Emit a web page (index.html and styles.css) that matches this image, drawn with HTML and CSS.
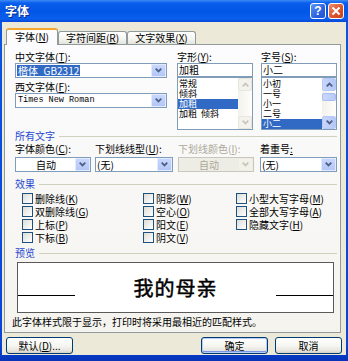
FILE: index.html
```html
<!DOCTYPE html>
<html lang="zh-CN">

<head>
  <meta charset="UTF-8">
  <title>字体</title>
  <link rel="stylesheet" href="styles.css">
</head>

<body>
  <div class="window">
    <div class="titlebar">
      <div class="title">字体</div>
      <div class="caption-buttons">
        <div class="cap-btn help">?</div>
        <div class="cap-btn close">
          <svg width="10" height="10" viewBox="0 0 10 10"><path d="M1.5 1.5 L8.5 8.5 M8.5 1.5 L1.5 8.5" stroke="#fff" stroke-width="2" fill="none"/></svg>
        </div>
      </div>
    </div>

    <div class="frame">
      <div class="client">
        <div class="tabs">
          <div class="tab active">字体(<u>N</u>)</div>
          <div class="tab">字符间距(<u>R</u>)</div>
          <div class="tab">文字效果(<u>X</u>)</div>
        </div>

        <div class="panel">
          <div class="font-row">
            <div class="col-font">
              <div class="label">中文字体(<u>T</u>):</div>
              <div class="combo">
                <div class="value"><span class="hilite">楷体_GB2312</span></div>
                <div class="drop"><svg width="7" height="5" viewBox="0 0 7 5"><path d="M0.7 0.7 L3.5 3.5 L6.3 0.7" stroke="#4D6185" stroke-width="1.8" fill="none"/></svg></div>
              </div>
              <div class="label second">西文字体(<u>F</u>):</div>
              <div class="combo">
                <div class="value latin">Times New Roman</div>
                <div class="drop"><svg width="7" height="5" viewBox="0 0 7 5"><path d="M0.7 0.7 L3.5 3.5 L6.3 0.7" stroke="#4D6185" stroke-width="1.8" fill="none"/></svg></div>
              </div>
            </div>

            <div class="col-list">
              <div class="label">字形(<u>Y</u>):</div>
              <div class="textbox">加粗</div>
              <div class="listbox">
                <div class="items">
                  <div class="item">常规</div>
                  <div class="item">倾斜</div>
                  <div class="item selected">加粗</div>
                  <div class="item">加粗&nbsp;&nbsp;倾斜</div>
                </div>
                <div class="scrollbar disabled">
                  <div class="arrow"><svg width="7" height="5" viewBox="0 0 7 5"><path d="M0.7 4.3 L3.5 1.5 L6.3 4.3" stroke="#C9C7BA" stroke-width="1.8" fill="none"/></svg></div>
                  <div class="track"></div>
                  <div class="arrow"><svg width="7" height="5" viewBox="0 0 7 5"><path d="M0.7 0.7 L3.5 3.5 L6.3 0.7" stroke="#C9C7BA" stroke-width="1.8" fill="none"/></svg></div>
                </div>
              </div>
            </div>

            <div class="col-list size">
              <div class="label">字号(<u>S</u>):</div>
              <div class="textbox">小二</div>
              <div class="listbox">
                <div class="items">
                  <div class="item">小初</div>
                  <div class="item">一号</div>
                  <div class="item">小一</div>
                  <div class="item">二号</div>
                  <div class="item selected">小二</div>
                </div>
                <div class="scrollbar">
                  <div class="arrow"><svg width="7" height="5" viewBox="0 0 7 5"><path d="M0.7 4.3 L3.5 1.5 L6.3 4.3" stroke="#4D6185" stroke-width="1.8" fill="none"/></svg></div>
                  <div class="track"><div class="thumb"></div></div>
                  <div class="arrow"><svg width="7" height="5" viewBox="0 0 7 5"><path d="M0.7 0.7 L3.5 3.5 L6.3 0.7" stroke="#4D6185" stroke-width="1.8" fill="none"/></svg></div>
                </div>
              </div>
            </div>
          </div>

          <div class="group-title"><span>所有文字</span><div class="rule"></div></div>

          <div class="attr-row">
            <div class="attr">
              <div class="label">字体颜色(<u>C</u>):</div>
              <div class="combo w76">
                <div class="value center">自动</div>
                <div class="drop"><svg width="7" height="5" viewBox="0 0 7 5"><path d="M0.7 0.7 L3.5 3.5 L6.3 0.7" stroke="#4D6185" stroke-width="1.8" fill="none"/></svg></div>
              </div>
            </div>
            <div class="attr">
              <div class="label">下划线线型(<u>U</u>):</div>
              <div class="combo w78">
                <div class="value">(无)</div>
                <div class="drop"><svg width="7" height="5" viewBox="0 0 7 5"><path d="M0.7 0.7 L3.5 3.5 L6.3 0.7" stroke="#4D6185" stroke-width="1.8" fill="none"/></svg></div>
              </div>
            </div>
            <div class="attr">
              <div class="label grey">下划线颜色(<u>I</u>):</div>
              <div class="combo w76 disabled">
                <div class="value center">自动</div>
                <div class="drop"><svg width="7" height="5" viewBox="0 0 7 5"><path d="M0.7 0.7 L3.5 3.5 L6.3 0.7" stroke="#C9C7BA" stroke-width="1.8" fill="none"/></svg></div>
              </div>
            </div>
            <div class="attr">
              <div class="label">着重号<u>:</u></div>
              <div class="combo w77">
                <div class="value">(无)</div>
                <div class="drop"><svg width="7" height="5" viewBox="0 0 7 5"><path d="M0.7 0.7 L3.5 3.5 L6.3 0.7" stroke="#4D6185" stroke-width="1.8" fill="none"/></svg></div>
              </div>
            </div>
          </div>

          <div class="group-title effects"><span>效果</span><div class="rule"></div></div>

          <div class="checks">
            <div class="check"><span class="box"></span>删除线(<u>K</u>)</div>
            <div class="check"><span class="box"></span>阴影(<u>W</u>)</div>
            <div class="check"><span class="box"></span>小型大写字母(<u>M</u>)</div>
            <div class="check"><span class="box"></span>双删除线(<u>G</u>)</div>
            <div class="check"><span class="box"></span>空心(<u>O</u>)</div>
            <div class="check"><span class="box"></span>全部大写字母(<u>A</u>)</div>
            <div class="check"><span class="box"></span>上标(<u>P</u>)</div>
            <div class="check"><span class="box"></span>阳文(<u>E</u>)</div>
            <div class="check"><span class="box"></span>隐藏文字(<u>H</u>)</div>
            <div class="check"><span class="box"></span>下标(<u>B</u>)</div>
            <div class="check"><span class="box"></span>阴文(<u>V</u>)</div>
          </div>

          <div class="group-title preview-title"><span>预览</span><div class="rule"></div></div>

          <div class="preview">
            <div class="baseline"></div>
            <div class="sample">我的母亲</div>
            <div class="baseline"></div>
          </div>

          <div class="note">此字体样式限于显示，打印时将采用最相近的匹配样式。</div>
        </div>

        <div class="buttons">
          <div class="btn">默认(<u>D</u>)...</div>
          <div class="spacer"></div>
          <div class="btn default">确定</div>
          <div class="btn">取消</div>
        </div>
      </div>
    </div>
  </div>
</body>

</html>
```

FILE: styles.css
```css
body {
  margin: 0;
  width: 348px;
  height: 361px;
  overflow: hidden;
  font-family: "Noto Sans CJK SC", "Noto Sans", sans-serif;
  font-size: 10px;
  color: #000;
}

u {
  text-decoration: underline;
  text-underline-offset: 1px;
}

.window {
  width: 348px;
  height: 361px;
  display: flex;
  flex-direction: column;
}

/* --- title bar --- */
.titlebar {
  height: 22px;
  flex: none;
  display: flex;
  align-items: center;
  justify-content: space-between;
  padding: 0 4px 0 5px;
  background: linear-gradient(to bottom, #3D8BF5 0, #0A5EEB 3px, #0256E6 50%, #0B5FEF 85%, #0846D6 100%);
}

.title {
  color: #fff;
  font-size: 12px;
  font-weight: bold;
  text-shadow: 1px 1px 0 #0A2A8C;
  line-height: 14px;
}

.caption-buttons {
  display: flex;
  gap: 2px;
}

.cap-btn {
  width: 16px;
  height: 16px;
  box-sizing: border-box;
  border: 1px solid #fff;
  border-radius: 3px;
  display: flex;
  align-items: center;
  justify-content: center;
}

.help {
  background: linear-gradient(to bottom right, #5F97F8, #2A62E2 60%, #1D52D6);
  color: #fff;
  font-family: "Liberation Sans", sans-serif;
  font-weight: bold;
  font-size: 12px;
  line-height: 14px;
}

.close {
  background: linear-gradient(to bottom right, #EE8B6B, #DC5530 55%, #C8401C);
}

/* --- frame and client area --- */
.frame {
  flex: 1;
  display: flex;
  padding: 0 2px 6px;
  background: linear-gradient(to bottom, #0A55E4, #0845D8 95%, #0634B8);
}

.client {
  flex: 1;
  background: #ECE9D8;
  padding: 6px 4px 0 2px;
  display: flex;
  flex-direction: column;
}

/* --- tabs --- */
.tabs {
  display: flex;
  align-items: flex-end;
  height: 16px;
  margin-left: 2px;
  position: relative;
  z-index: 1;
}

.tab {
  height: 13px;
  width: 69px;
  box-sizing: border-box;
  border: 1px solid #919B9C;
  border-bottom: none;
  border-radius: 3px 3px 0 0;
  background: linear-gradient(to bottom, #FFFFFF, #F4F4F0 60%, #E4E3DB);
  text-align: center;
  line-height: 11px;
  white-space: nowrap;
}

.tab.active {
  width: 52px;
  height: 17px;
  margin-bottom: -1px;
  border-top: 2px solid #F4A62D;
  background: #FCFCFE;
  line-height: 13px;
}

/* --- tab panel --- */
.panel {
  width: 337px;
  height: 289px;
  box-sizing: border-box;
  border: 1px solid #919B9C;
  background: linear-gradient(to bottom, #FCFCFE, #F4F3EE);
  padding: 6px 3px 0 10px;
  display: flex;
  flex-direction: column;
}

.label {
  height: 12px;
  line-height: 12px;
  white-space: nowrap;
}

.label.second {
  margin-top: 3px;
}

.label.grey {
  color: #ACA899;
}

.font-row {
  display: flex;
  height: 79px;
}

.col-font {
  width: 152px;
}

.col-list {
  width: 76px;
  margin-left: 10px;
}

.col-list.size {
  margin-left: 8px;
}

.combo {
  height: 15px;
  box-sizing: border-box;
  border: 1px solid #7F9DB9;
  background: #fff;
  display: flex;
}

.combo .value {
  flex: 1;
  padding-left: 1px;
  line-height: 13px;
  white-space: nowrap;
  overflow: hidden;
}

.combo .value.center {
  text-align: center;
}

.combo .value.latin {
  font-family: "Liberation Mono", monospace;
  font-size: 8.5px;
  padding-left: 2px;
}

.hilite {
  display: inline-block;
  background: #316AC5;
  color: #fff;
  line-height: 11px;
  padding: 0 1px;
  margin-top: 1px;
  vertical-align: top;
}

.combo .drop {
  width: 15px;
  box-sizing: border-box;
  border: 1px solid #E1EAFE;
  border-radius: 1px;
  background: linear-gradient(to bottom, #C8D7FD, #B3C6F7);
  display: flex;
  align-items: center;
  justify-content: center;
}

.combo.disabled {
  background: #EEEDE5;
  border-color: #C9C7BA;
  color: #ACA899;
}

.combo.disabled .drop {
  background: #F2F1EA;
  border-color: #EEEDE5;
}

.w76 { width: 76px; }
.w77 { width: 77px; }
.w78 { width: 78px; }

.textbox {
  height: 14px;
  box-sizing: border-box;
  border: 1px solid #7F9DB9;
  background: #fff;
  line-height: 12px;
  padding-left: 1px;
}

.listbox {
  height: 53px;
  box-sizing: border-box;
  border: 1px solid #7F9DB9;
  background: #fff;
  display: flex;
}

.items {
  flex: 1;
  padding-top: 1px;
}

.item {
  height: 10px;
  line-height: 10px;
  font-size: 9px;
  padding-left: 1px;
  white-space: nowrap;
}

.item.selected {
  background: #316AC5;
  color: #fff;
}

.scrollbar {
  width: 14px;
  display: flex;
  flex-direction: column;
  background: linear-gradient(to right, #F3F1EC, #FEFEFB);
}

.scrollbar .arrow {
  height: 13px;
  box-sizing: border-box;
  border: 1px solid #B7C9F6;
  border-radius: 2px;
  background: linear-gradient(to right, #C8D6FC, #B4C7F6);
  display: flex;
  align-items: center;
  justify-content: center;
}

.scrollbar.disabled .arrow {
  border-color: #E8E6DB;
  background: #F3F2EC;
}

.scrollbar .track {
  flex: 1;
  padding-top: 2px;
}

.thumb {
  height: 8px;
  box-sizing: border-box;
  border: 1px solid #A9BDF4;
  border-radius: 2px;
  background: linear-gradient(to right, #CAD8FC, #B8CAF8);
}

/* --- group titles --- */
.group-title {
  display: flex;
  align-items: center;
  height: 12px;
  line-height: 12px;
  color: #2547D0;
}

.group-title .rule {
  flex: 1;
  height: 1px;
  background: #D0D0BF;
  margin-left: 4px;
}

.group-title.effects {
  margin-top: 6px;
}

.group-title.preview-title {
  margin-top: 3px;
}

/* --- text attributes --- */
.attr-row {
  display: grid;
  grid-template-columns: 80px 83px 82px 77px;
  margin-top: 1px;
}

.attr .combo {
  margin-top: 2px;
}

/* --- effects --- */
.checks {
  display: grid;
  grid-template-columns: 121px 93px 1fr;
  grid-auto-rows: 13px;
  padding-left: 7px;
  margin-top: 2px;
}

.check {
  display: flex;
  align-items: center;
  white-space: nowrap;
  line-height: 12px;
}

.box {
  width: 11px;
  height: 11px;
  box-sizing: border-box;
  border: 1px solid #1C5180;
  background: linear-gradient(135deg, #DCDCD7, #FFFFFF);
  margin-right: 2px;
}

/* --- preview --- */
.preview {
  width: 317px;
  height: 51px;
  box-sizing: border-box;
  margin: 3px 0 0 2px;
  border: 1px solid #5A5A5A;
  background: #fff;
  display: flex;
  align-items: center;
  justify-content: space-between;
}

.baseline {
  width: 57px;
  height: 1px;
  background: #000;
  margin-top: 15px;
}

.sample {
  font-size: 20px;
  font-weight: normal;
  -webkit-text-stroke: 0.5px #000;
  letter-spacing: 1px;
  line-height: 24px;
}

.note {
  margin: 3px 0 0 -3px;
  height: 12px;
  line-height: 12px;
  white-space: nowrap;
}

/* --- buttons --- */
.buttons {
  display: flex;
  margin: 4px 0 0 2px;
  gap: 7px;
}

.spacer {
  flex: 1;
}

.btn {
  width: 67px;
  height: 17px;
  box-sizing: border-box;
  border: 1px solid #003C74;
  border-radius: 3px;
  background: linear-gradient(to bottom, #FFFFFF, #F4F4F0 55%, #E6E4DC 85%, #D6D0C5);
  display: flex;
  align-items: center;
  justify-content: center;
  line-height: 12px;
}

.btn.default {
  box-shadow: inset 0 0 0 1px #B7CBF8, inset 0 -1px 0 1px #7B96E8;
}
```
